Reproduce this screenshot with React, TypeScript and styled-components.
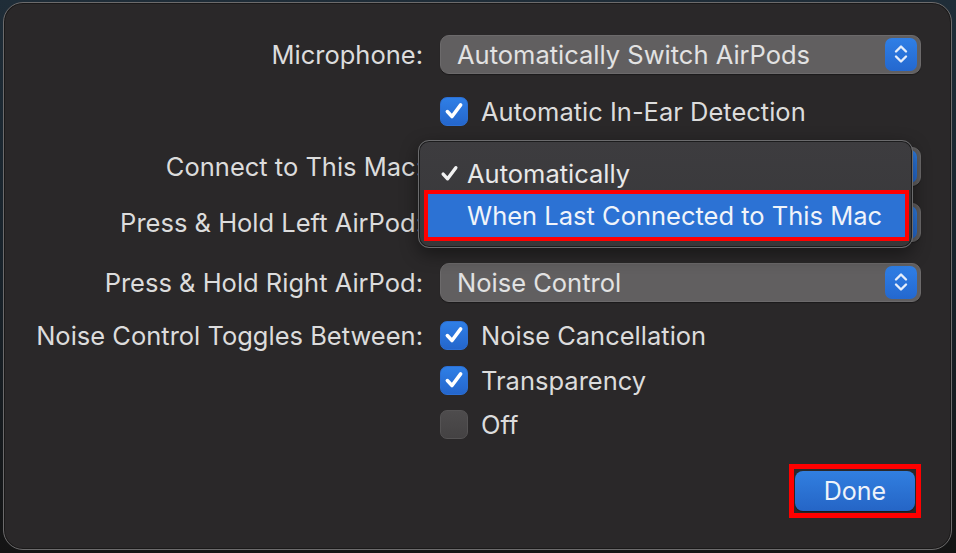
import React from "react";
import styled, { createGlobalStyle } from "styled-components";

const GlobalStyle = createGlobalStyle`
    html, body {
        margin: 0;
        padding: 0;
        height: 100%;
    }
    body {
        background: linear-gradient(180deg, #1f2d38 0%, #18222a 50%, #141414 100%);
        font-family: Inter, "Noto Sans", "Liberation Sans", sans-serif;
        overflow: hidden;
    }
`;

const Window = styled.div`
    margin: 2px 0 0 3px;
    width: 949px;
    height: 548px;
    box-sizing: border-box;
    border: 1px solid #6c6b6c;
    border-radius: 20px;
    background: #2a2829;
    box-shadow: inset 0 0 0 1px #1a1919;
    padding: 22px 30px 0 0;
    display: flex;
    flex-direction: column;
`;

const Form = styled.div`
    display: grid;
    grid-template-columns: 419px 481px;
    column-gap: 17px;
`;

const Label = styled.div<{ $h: number }>`
    height: ${(p) => p.$h}px;
    display: flex;
    align-items: center;
    justify-content: flex-end;
    color: #dcdcdc;
    font-size: 25.5px;
    white-space: nowrap;
`;

const Cell = styled.div<{ $h: number }>`
    height: ${(p) => p.$h}px;
    display: flex;
    align-items: center;
    position: relative;
`;

const Popup = styled.div`
    width: 100%;
    height: 39px;
    box-sizing: border-box;
    border-radius: 9px;
    background: #615f60;
    border: 1px solid #6c6a6b;
    box-shadow: 0 1px 1px rgba(0, 0, 0, 0.35);
    display: flex;
    align-items: center;
    justify-content: space-between;
    padding: 0 3px 0 16px;
    color: #e2e2e2;
    font-size: 25.5px;
`;

const Stepper = styled.div`
    width: 32px;
    height: 33px;
    border-radius: 7px;
    background: linear-gradient(180deg, #2f7fe6 0%, #2468cf 100%);
    display: flex;
    align-items: center;
    justify-content: center;
`;

const CheckRow = styled.label`
    display: flex;
    align-items: center;
    gap: 13px;
    color: #dcdcdc;
    font-size: 25.5px;
`;

const Box = styled.span<{ $on: boolean }>`
    width: 28px;
    height: 29px;
    box-sizing: border-box;
    border-radius: 7px;
    display: flex;
    align-items: center;
    justify-content: center;
    background: ${(p) =>
        p.$on
            ? "linear-gradient(180deg, #2f7fe6 0%, #2466cc 100%)"
            : "linear-gradient(180deg, #4e4c4d 0%, #444243 100%)"};
    border: 1px solid ${(p) => (p.$on ? "#2c6fd4" : "#555354")};
`;

const Menu = styled.div`
    position: absolute;
    left: -22px;
    top: 1px;
    width: 495px;
    height: 108px;
    box-sizing: border-box;
    border: 1px solid #6b6b6d;
    border-radius: 11px;
    background: linear-gradient(180deg, #3d3c3f 0%, #38383a 100%);
    box-shadow: 0 6px 18px rgba(0, 0, 0, 0.45), inset 0 0 0 1px #1c1c1d;
    padding: 11px 7px 0 9px;
    z-index: 2;
`;

const MenuItem = styled.div<{ $active?: boolean }>`
    height: ${(p) => (p.$active ? 43 : 42)}px;
    display: flex;
    align-items: center;
    padding-left: 12px;
    gap: 8px;
    font-size: 25.5px;
    color: ${(p) => (p.$active ? "#f0f4fa" : "#e8e8e8")};
    background: ${(p) => (p.$active ? "#2c72d4" : "transparent")};
    outline: ${(p) => (p.$active ? "4px solid #ff0000" : "none")};
`;

const Tick = styled.span`
    width: 19px;
    display: flex;
    justify-content: center;
`;

const Footer = styled.div`
    margin-top: auto;
    margin-bottom: 31px;
    display: flex;
    justify-content: flex-end;
`;

const Outline = styled.div`
    border: 5px solid #ff0000;
    padding: 2px 1px;
    display: flex;
`;

const DoneButton = styled.button`
    width: 120px;
    height: 40px;
    border: none;
    border-radius: 8px;
    background: linear-gradient(180deg, #317fe0 0%, #2565c6 100%);
    color: #eef3fa;
    font-family: inherit;
    font-size: 25px;
    box-shadow: 0 1px 1px rgba(0, 0, 0, 0.4);
    cursor: pointer;
`;

const StepperIcon = () => (
    <svg width="16" height="22" viewBox="0 0 16 22" fill="none">
        <path d="M3 8.5 L8 3.5 L13 8.5" stroke="#e6eefb" strokeWidth="2.4" strokeLinecap="round" strokeLinejoin="round" />
        <path d="M3 13.5 L8 18.5 L13 13.5" stroke="#e6eefb" strokeWidth="2.4" strokeLinecap="round" strokeLinejoin="round" />
    </svg>
);

const CheckIcon = ({ color = "#ffffff", size = 20 }: { color?: string; size?: number }) => (
    <svg width={size} height={size} viewBox="0 0 18 18" fill="none">
        <path d="M3 9.5 L7.2 14 L15 3.5" stroke={color} strokeWidth="3.2" strokeLinecap="round" strokeLinejoin="round" />
    </svg>
);

const Select = ({ value }: { value: string }) => (
    <Popup>
        <span>{value}</span>
        <Stepper>
            <StepperIcon />
        </Stepper>
    </Popup>
);

const Check = ({ on, text }: { on: boolean; text: string }) => (
    <CheckRow>
        <Box $on={on}>{on && <CheckIcon />}</Box>
        {text}
    </CheckRow>
);

export default function App() {
    return (
        <>
            <GlobalStyle />
            <Window>
                <Form>
                    <Label $h={58}>Microphone:</Label>
                    <Cell $h={58}>
                        <Select value="Automatically Switch AirPods" />
                    </Cell>

                    <Label $h={56} />
                    <Cell $h={56}>
                        <Check on text="Automatic In-Ear Detection" />
                    </Cell>

                    <Label $h={54}>Connect to This Mac:</Label>
                    <Cell $h={54}>
                        <Select value="" />
                        <Menu>
                            <MenuItem>
                                <Tick>
                                    <CheckIcon color="#f2f2f2" size={19} />
                                </Tick>
                                Automatically
                            </MenuItem>
                            <MenuItem $active>
                                <Tick />
                                When Last Connected to This Mac
                            </MenuItem>
                        </Menu>
                    </Cell>

                    <Label $h={58}>Press &amp; Hold Left AirPod:</Label>
                    <Cell $h={58}>
                        <Select value="" />
                    </Cell>

                    <Label $h={62}>Press &amp; Hold Right AirPod:</Label>
                    <Cell $h={62}>
                        <Select value="Noise Control" />
                    </Cell>

                    <Label $h={44}>Noise Control Toggles Between:</Label>
                    <Cell $h={44}>
                        <Check on text="Noise Cancellation" />
                    </Cell>

                    <Label $h={46} />
                    <Cell $h={46}>
                        <Check on text="Transparency" />
                    </Cell>

                    <Label $h={42} />
                    <Cell $h={42}>
                        <Check on={false} text="Off" />
                    </Cell>
                </Form>
                <Footer>
                    <Outline>
                        <DoneButton>Done</DoneButton>
                    </Outline>
                </Footer>
            </Window>
        </>
    );
}
